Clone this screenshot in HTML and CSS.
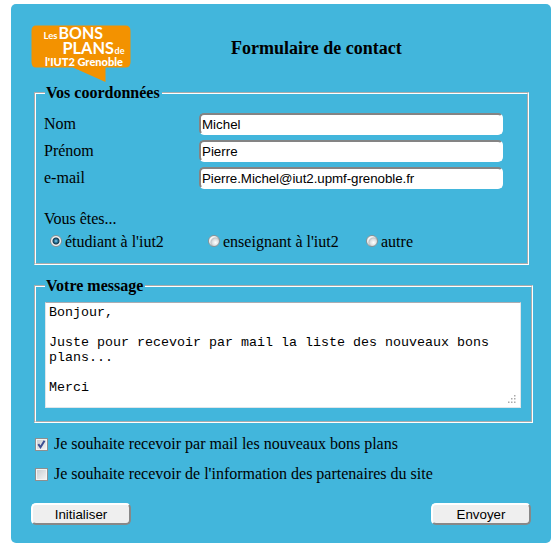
FILE: index.html
```html
<!DOCTYPE html>
<html lang="fr">
<head>
<meta charset="utf-8">
<title>Formulaire de contact</title>
<link rel="stylesheet" href="styles.css">
</head>
<body>
<form class="panel">
  <header class="header">
    <svg class="logo" width="101" height="58" viewBox="0 0 101 58" role="img" aria-label="Les bons plans de l'IUT2 Grenoble">
      <path fill="#f39200" d="M5 .5H94.500Q99.500 .5 99.500 6V37Q99.500 42.500 94.500 42.500H74.500V57L42 42.500H5Q.5 42.500 .5 37V6Q.5 .5 5 .5Z"/>
      <g fill="#fff" font-family="Lato, sans-serif" font-weight="700">
        <text x="12.500" y="14" font-size="9.500" textLength="14" lengthAdjust="spacingAndGlyphs">Les</text>
        <text x="27.500" y="14" font-size="17" textLength="44.500" lengthAdjust="spacingAndGlyphs">BONS</text>
        <text x="31.500" y="29" font-size="17" textLength="51.500" lengthAdjust="spacingAndGlyphs">PLANS</text>
        <text x="83.500" y="29" font-size="9.500" textLength="10" lengthAdjust="spacingAndGlyphs">de</text>
        <text x="14" y="40.500" font-size="11" font-weight="900" textLength="78" lengthAdjust="spacingAndGlyphs">l'IUT2 Grenoble</text>
      </g>
    </svg>
    <h1 class="title">Formulaire de contact</h1>
  </header>

  <fieldset class="group details">
    <legend>Vos coordonnées</legend>
    <div class="row"><label for="nom">Nom</label><input class="field" id="nom" type="text" value="Michel"></div>
    <div class="row"><label for="prenom">Prénom</label><input class="field" id="prenom" type="text" value="Pierre"></div>
    <div class="row"><label for="mail">e-mail</label><input class="field email" id="mail" type="text" value="Pierre.Michel@iut2.upmf-grenoble.fr"></div>
    <p class="question">Vous êtes...</p>
    <div class="choices">
      <label class="choice"><input class="radio" type="radio" name="statut" checked>étudiant à l'iut2</label>
      <label class="choice"><input class="radio" type="radio" name="statut">enseignant à l'iut2</label>
      <label class="choice"><input class="radio" type="radio" name="statut">autre</label>
    </div>
  </fieldset>

  <fieldset class="group message">
    <legend>Votre message</legend>
    <div class="editor">
      <textarea class="textarea" aria-label="Votre message">Bonjour,

Juste pour recevoir par mail la liste des nouveaux bons plans...

Merci</textarea>
      <svg class="grip" width="9" height="9" viewBox="0 0 9 9" aria-hidden="true"><path fill="#aaa" d="M7 0h1.500v1.500H7zM4 3h1.500v1.500H4zM7 3h1.500v1.500H7zM1 6.500h1.500V8H1zM4 6.500h1.500V8H4zM7 6.500h1.500V8H7z"/></svg>
    </div>
  </fieldset>

  <label class="option"><span class="box"><input class="check" type="checkbox" checked><svg class="tick" width="13" height="13" viewBox="0 0 13 13" aria-hidden="true"><path fill="none" stroke="#3d4f93" stroke-width="2" d="M3.300 6.200L5.500 9.300L9.500 2.800"/></svg></span>Je souhaite recevoir par mail les nouveaux bons plans</label>
  <label class="option"><span class="box"><input class="check" type="checkbox"></span>Je souhaite recevoir de l'information des partenaires du site</label>

  <footer class="actions">
    <button class="button" type="reset">Initialiser</button>
    <button class="button" type="submit">Envoyer</button>
  </footer>
</form>
</body>
</html>
```
FILE: styles.css
```css
* { box-sizing: border-box; }

body {
  margin: 0;
  background: #fff;
  color: #000;
  font: 16px/18px "Liberation Serif", serif;
}

.panel {
  width: 540px;
  height: 539px;
  margin: 4px 0 0 11px;
  padding: 21px 20px 0;
  background: #42b6dc;
  border-radius: 5px;
  overflow: hidden;
}

.header {
  display: flex;
  height: 59px;
}

.logo { flex: none; }

.title {
  margin: 13px 0 0 99px;
  font-size: 18px;
  line-height: 21px;
  white-space: nowrap;
}

.group {
  min-width: 0;
  margin: 0 0 0 3px;
  border: 2px groove #fff;
}

.group legend {
  height: 18px;
  padding: 0 2px 0 1px;
  font-weight: bold;
}

.details {
  width: 495px;
  height: 181px;
  padding: 11px 8px 0;
}

.details legend { margin-left: 1px; }

.row {
  display: flex;
  align-items: center;
  height: 22px;
  margin-bottom: 5px;
}

.row label { width: 155px; }

.field {
  width: 304px;
  height: 22px;
  margin: 0;
  padding: 0 1px;
  border: 2px solid;
  border-color: #848484 #fff #fff #848484;
  border-radius: 5px;
  background: #fff;
  color: #000;
  font: 13.333px "Liberation Sans", sans-serif;
}

.email { letter-spacing: -0.06px; }

.question { margin: 21px 0 5px; }

.choices {
  display: grid;
  grid-template-columns: 158px 158px 1fr;
  padding-left: 5px;
}

.choice {
  display: flex;
  align-items: center;
  white-space: nowrap;
}

.radio {
  appearance: none;
  width: 12px;
  height: 12px;
  margin: 0 3px 2px 1px;
  border: 1px solid #8b9295;
  border-radius: 50%;
  background: radial-gradient(circle at 65% 65%, #fff, #dcdfe1 35%, #bfc4c8 50%, #f4f4f4 62%);
}

.radio:checked {
  background: radial-gradient(circle at 50% 50%, #8fd3ee 0, #2f7fa6 1.5px, #12384f 3px, #f4f4f4 4px);
}

.message {
  width: 499px;
  height: 146px;
  margin-top: 12px;
  padding: 7px 9px 0;
}

.editor {
  position: relative;
  width: 476px;
  height: 106px;
}

.textarea {
  display: block;
  width: 476px;
  height: 106px;
  margin: 0;
  padding: 2px 3px;
  border: 1px solid #dfe6ea;
  border-top-color: #abadb3;
  background: #fff;
  color: #000;
  font: 13.333px/15px "Liberation Mono", monospace;
  resize: none;
  overflow: hidden;
}

.grip {
  position: absolute;
  right: 5px;
  bottom: 4px;
}

.option {
  display: flex;
  align-items: center;
  height: 18px;
  margin: 12px 0 0 4px;
  white-space: nowrap;
}

.box {
  position: relative;
  width: 13px;
  height: 13px;
  margin-right: 6px;
}

.check {
  appearance: none;
  display: block;
  width: 13px;
  height: 13px;
  margin: 0;
  border: 1px solid #8e8f8f;
  background: linear-gradient(135deg, #c5cbd0, #f6f6f6);
  box-shadow: inset 0 0 0 1px #f4f4f4;
}

.tick {
  position: absolute;
  inset: 0;
}

.actions {
  display: flex;
  justify-content: space-between;
  margin-top: 20px;
}

.button {
  width: 100px;
  height: 22px;
  padding: 0;
  border: 2px solid;
  border-color: #fff #888 #888 #fff;
  border-radius: 5px;
  background: #efefef;
  color: #000;
  font: 13.333px "Liberation Sans", sans-serif;
}
```
